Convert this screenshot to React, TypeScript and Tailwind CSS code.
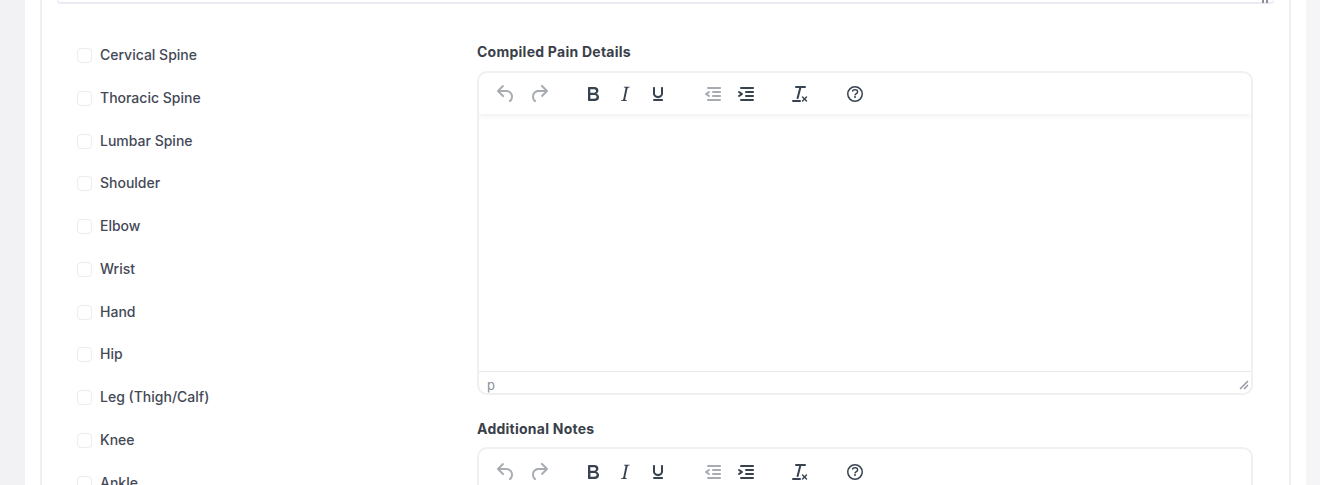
import React from "react";

const P = {
  undo: "M6.4 8H12c3.7 0 6.2 2 6.8 5.1.6 2.7-.4 5.6-2.3 6.8a1 1 0 0 1-1-1.8c1.1-.6 1.8-2.7 1.4-4.6-.5-2.1-2.1-3.5-4.9-3.5H6.4l3.3 3.3a1 1 0 1 1-1.4 1.4l-5-5a1 1 0 0 1 0-1.4l5-5a1 1 0 0 1 1.4 1.4L6.4 8Z",
  redo: "M17.6 10H12c-2.8 0-4.4 1.4-4.9 3.5-.4 2 .3 4 1.4 4.6a1 1 0 1 1-1 1.8c-2-1.2-2.9-4.1-2.3-6.8.6-3 3-5.1 6.8-5.1h5.6l-3.3-3.3a1 1 0 1 1 1.4-1.4l5 5a1 1 0 0 1 0 1.4l-5 5a1 1 0 0 1-1.4-1.4l3.3-3.3Z",
  bold: "M7.8 19c-.3 0-.5 0-.6-.2l-.2-.5V5.7c0-.2 0-.4.2-.5l.6-.2h5c1.5 0 2.7.3 3.5 1 .7.6 1.1 1.4 1.1 2.5a3 3 0 0 1-.6 1.9c-.4.6-1 1-1.6 1.2.4.1.9.3 1.3.6s.8.7 1 1.2c.4.4.5 1 .5 1.6 0 1.3-.4 2.3-1.3 3-.8.7-2.1 1-3.8 1H7.8Zm5-8.3c.6 0 1.2-.1 1.6-.5.4-.3.6-.7.6-1.3 0-1.1-.8-1.7-2.3-1.7H9.3v3.5h3.4Zm.5 6c.7 0 1.3-.1 1.7-.4.4-.4.6-.9.6-1.5s-.2-1-.7-1.4c-.4-.3-1-.4-2-.4H9.4v3.8h4Z",
  italic: "m16.7 4.7-.1.9h-.3c-.6 0-1 0-1.4.3-.3.3-.4.6-.5 1.1l-2.1 9.8v.6c0 .5.4.8 1.4.8h.2l-.2.8H8l.2-.8h.2c1.1 0 1.8-.5 2-1.5l2-9.8.1-.5c0-.6-.4-.8-1.4-.8h-.3l.2-.9h5.8Z",
  underline: "M16 5c.6 0 1 .4 1 1v5.5a4 4 0 0 1-.4 1.8l-1 1.4a5.3 5.3 0 0 1-5.5 1 5 5 0 0 1-1.6-1c-.5-.4-.8-.9-1.1-1.4a4 4 0 0 1-.4-1.8V6c0-.6.4-1 1-1s1 .4 1 1v5.5c0 .3 0 .6.2 1l.6.7a3.3 3.3 0 0 0 2.2.8 3.4 3.4 0 0 0 2.2-.8c.3-.2.4-.5.6-.8l.2-.9V6c0-.6.4-1 1-1ZM8 17h8c.6 0 1 .4 1 1s-.4 1-1 1H8a1 1 0 0 1 0-2Z",
  outdent: "M7 5h12c.6 0 1 .4 1 1s-.4 1-1 1H7a1 1 0 1 1 0-2Zm5 4h7c.6 0 1 .4 1 1s-.4 1-1 1h-7a1 1 0 0 1 0-2Zm0 4h7c.6 0 1 .4 1 1s-.4 1-1 1h-7a1 1 0 0 1 0-2Zm-5 4h12a1 1 0 0 1 0 2H7a1 1 0 0 1 0-2Zm1.6-3.8a1 1 0 0 1-1.2 1.6l-3-2a1 1 0 0 1 0-1.6l3-2a1 1 0 0 1 1.2 1.6L6.8 12l1.8 1.2Z",
  indent: "M7 5h12c.6 0 1 .4 1 1s-.4 1-1 1H7a1 1 0 1 1 0-2Zm5 4h7c.6 0 1 .4 1 1s-.4 1-1 1h-7a1 1 0 0 1 0-2Zm0 4h7c.6 0 1 .4 1 1s-.4 1-1 1h-7a1 1 0 0 1 0-2Zm-5 4h12a1 1 0 0 1 0 2H7a1 1 0 0 1 0-2Zm-2.6-3.8L6.2 12l-1.8-1.2a1 1 0 0 1 1.2-1.6l3 2a1 1 0 0 1 0 1.6l-3 2a1 1 0 1 1-1.2-1.6Z",
  clear: "M13.2 6a1 1 0 0 1 0 .2l-2.6 10a1 1 0 0 1-1 .8h-.2a.8.8 0 0 1-.8-1l2.6-10H8a1 1 0 1 1 0-2h9a1 1 0 0 1 0 2h-3.8ZM5 18h7a1 1 0 0 1 0 2H5a1 1 0 0 1 0-2Zm13 1.5L16.5 18 15 19.5a.7.7 0 0 1-1-1l1.5-1.5-1.5-1.5a.7.7 0 0 1 1-1l1.5 1.5 1.5-1.5a.7.7 0 0 1 1 1L17.5 17l1.5 1.5a.7.7 0 0 1-1 1Z",
};

function Ic({ d, off, cls }: { d: string; off?: boolean; cls: string }) {
  return (
    <svg viewBox="0 0 24 24" className={`h-6 w-6 shrink-0 ${cls} ${off ? "fill-[#222f3e]/40" : "fill-[#222f3e]/90"}`}>
      <path d={d} />
    </svg>
  );
}

function Help({ cls }: { cls: string }) {
  return (
    <svg viewBox="0 0 24 24" className={`h-6 w-6 shrink-0 fill-[#222f3e]/90 ${cls}`}>
      <path fillRule="evenodd" d="M12 5.5a6.5 6.5 0 1 0 0 13 6.5 6.5 0 0 0 0-13Zm0-1.5a8 8 0 1 1 0 16 8 8 0 0 1 0-16Z" />
      <path d="M9.6 9.7a.7.7 0 0 1-.7-.8c0-1.1 1.5-1.8 3.2-1.8 1.8 0 3.2.8 3.2 2.4 0 1.4-.4 2.1-1.5 2.8-.2 0-.3.1-.3.2a2 2 0 0 0-.8.8.8.8 0 0 1-1.4-.6c.3-.7.8-1 1.3-1.5l.4-.2c.7-.4.8-.6.8-1.5 0-.5-.6-.9-1.7-.9-.9 0-1.7.4-1.7.4v.1c0 .3-.4.6-.8.6Z" />
      <path d="M12 16a1 1 0 1 0 0-2 1 1 0 0 0 0 2Z" />
    </svg>
  );
}

function Toolbar({ h }: { h: string }) {
  return (
    <div className={`relative flex items-center pl-[15px] shadow-[0_2px_6px_rgba(34,47,62,0.08)] ${h}`}>
      <Ic d={P.undo} off cls="" />
      <Ic d={P.redo} off cls="ml-[9px]" />
      <Ic d={P.bold} cls="ml-[30px]" />
      <Ic d={P.italic} cls="ml-[8px]" />
      <Ic d={P.underline} cls="ml-[9px]" />
      <Ic d={P.outdent} off cls="ml-[31px]" />
      <Ic d={P.indent} cls="ml-[9px]" />
      <Ic d={P.clear} cls="ml-[30px]" />
      <Help cls="ml-[31px]" />
    </div>
  );
}

const parts = ["Cervical Spine", "Thoracic Spine", "Lumbar Spine", "Shoulder", "Elbow", "Wrist", "Hand", "Hip", "Leg (Thigh/Calf)", "Knee", "Ankle"];

export default function App() {
  return (
    <div className="h-[485px] overflow-hidden bg-gradient-to-r from-[#f2f2f5] to-[#f5f5f7] pl-[25px] pr-[14px] font-['Inter','Noto_Sans',sans-serif] text-[14px] text-[#3a3f4a]">
      <div className="h-full bg-white px-[15px]">
        <div className="h-full border-x-2 border-[#f0f0f3] px-[15px]">
          <div className="relative h-[4px] rounded-b-md border-x border-b-2 border-[#ecebf5]">
            <svg viewBox="0 0 10 4" className="absolute -bottom-[2px] right-[2px] h-[4px] w-[10px] fill-[#8a8f99]">
              <rect x="1" y="0" width="2" height="3" />
              <rect x="5" y="0" width="2" height="3" />
            </svg>
          </div>
          <div className="flex pl-[20px] pr-[21px] pt-[27px]">
            <div className="w-[400px] shrink-0">
              {parts.map((p) => (
                <label key={p} className="flex h-[42.75px] items-start pt-[16px]">
                  <span className="mr-[8px] mt-[1px] h-[15px] w-[15px] shrink-0 rounded-[4px] border border-[#ececef] bg-white" />
                  <span className="text-[14px] font-medium leading-[16px] text-[#444956]">{p}</span>
                </label>
              ))}
            </div>
            <div className="min-w-0 flex-1">
              <div className="mb-[8px] mt-[10px] text-[14px] font-bold leading-[22px] tracking-[0.25px] text-[#3a3f4a]">Compiled Pain Details</div>
              <div className="h-[324px] overflow-hidden rounded-[10px] border-2 border-[#f0f0f0]">
                <Toolbar h="h-[41px]" />
                <div className="h-[257px]" />
                <div className="relative flex h-[22px] items-start border-t border-[#e8e8e8] pl-[8px] pt-[7px] text-[13px] leading-none text-[#8a8f99]">
                  p
                  <svg viewBox="0 0 10 10" className="absolute bottom-[3px] right-[2px] h-[10px] w-[10px] stroke-[#8a8f99]">
                    <path d="M1 9 9 1M5 9l4-4" strokeWidth="1.3" />
                  </svg>
                </div>
              </div>
              <div className="mb-[7px] mt-[23px] text-[14px] font-bold leading-[22px] tracking-[0.25px] text-[#3a3f4a]">Additional Notes</div>
              <div className="h-[100px] overflow-hidden rounded-[10px] border-2 border-[#f0f0f0]">
                <Toolbar h="h-[45px]" />
              </div>
            </div>
          </div>
        </div>
      </div>
    </div>
  );
}
